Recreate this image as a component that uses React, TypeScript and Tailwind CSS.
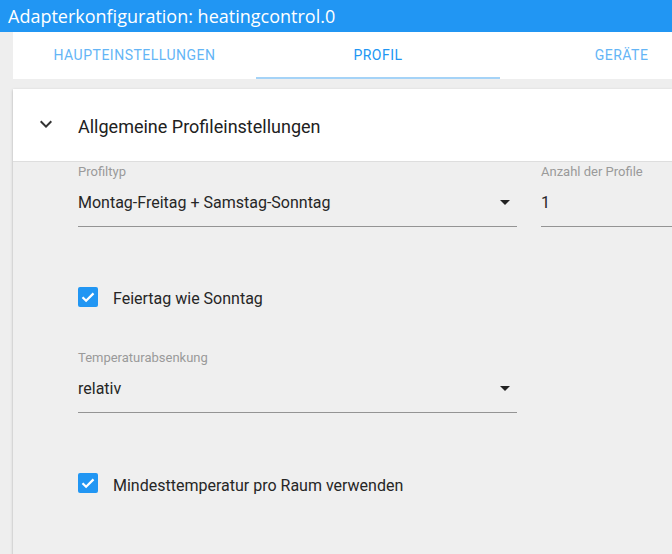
import React from "react";

function Arrow() {
  return (
    <svg width="24" height="24" viewBox="0 0 24 24" className="absolute right-0 top-[10px]">
      <path d="M7 10l5 5 5-5z" fill="#222" />
    </svg>
  );
}

function Check() {
  return (
    <svg width="20" height="20" viewBox="0 0 20 20" className="shrink-0">
      <rect x="0" y="0" width="20" height="20" rx="2" fill="#2196f3" />
      <path d="M4.5 10.2l3.6 3.6 7.4-7.4" fill="none" stroke="#fff" strokeWidth="2.2" />
    </svg>
  );
}

export default function App() {
  return (
    <div className="w-[672px] h-[554px] bg-[#eeeeee] overflow-hidden" style={{ fontFamily: "Roboto, 'Liberation Sans', sans-serif" }}>
      <div className="h-[32px] bg-[#2196f3] text-white pl-[8px] text-[18px] leading-[32px] whitespace-nowrap" style={{ fontFamily: "'Open Sans', 'Noto Sans', sans-serif" }}>
        Adapterkonfiguration: heatingcontrol.0
      </div>
      <div className="ml-[13px] h-[47px] bg-white flex overflow-hidden">
        <div className="w-[243px] shrink-0 flex items-center justify-center text-[14px] text-[#64b5f6] tracking-[0.5px]">HAUPTEINSTELLUNGEN</div>
        <div className="w-[244px] shrink-0 flex items-center justify-center text-[14px] text-[#2196f3] relative tracking-[0.5px]">
          PROFIL
          <div className="absolute left-0 right-0 bottom-0 h-[2px] bg-[#a5d3f7]" />
        </div>
        <div className="w-[243px] shrink-0 flex items-center justify-center text-[14px] text-[#64b5f6] tracking-[0.5px]">GERÄTE</div>
      </div>
      <div className="ml-[13px] mt-[10px] h-[600px] bg-[#efefef] shadow-[0_1px_3px_0_rgba(0,0,0,0.2),0_1px_1px_0_rgba(0,0,0,0.14),0_2px_1px_-1px_rgba(0,0,0,0.12)]">
        <div className="h-[73px] bg-white border-b border-[#dedede] flex items-center">
          <svg width="24" height="24" viewBox="0 0 24 24" className="ml-[21px] mt-[-3px]">
            <path d="M16.59 8.59L12 13.17 7.41 8.59 6 10l6 6 6-6z" fill="#333" />
          </svg>
          <div className="ml-[20px] text-[18px] text-[#212121] pt-[3px]">Allgemeine Profileinstellungen</div>
        </div>
        <div className="pl-[65px]">
          <div className="flex gap-[24px] pt-[1px]">
            <div className="w-[439px] shrink-0">
              <div className="h-[17px] text-[13px] leading-[17px] text-[#9a9a9a]">Profiltyp</div>
              <div className="relative h-[47px] border-b border-[#949494] flex items-center text-[16px] text-[#262626]">
                Montag-Freitag + Samstag-Sonntag
                <Arrow />
              </div>
            </div>
            <div className="w-[200px] shrink-0">
              <div className="h-[17px] text-[13px] leading-[17px] text-[#9a9a9a]">Anzahl der Profile</div>
              <div className="h-[47px] border-b border-[#949494] flex items-center text-[16px] text-[#262626]">1</div>
            </div>
          </div>
          <div className="mt-[60px] flex items-center h-[20px]">
            <Check />
            <div className="ml-[15px] text-[16px] text-[#262626] pt-[3px]">Feiertag wie Sonntag</div>
          </div>
          <div className="mt-[42px] w-[439px]">
            <div className="h-[17px] text-[13px] leading-[17px] text-[#9a9a9a]">Temperaturabsenkung</div>
            <div className="relative h-[47px] border-b border-[#949494] flex items-center text-[16px] text-[#262626]">
              relativ
              <Arrow />
            </div>
          </div>
          <div className="mt-[60px] flex items-center h-[20px]">
            <Check />
            <div className="ml-[15px] text-[16px] text-[#262626] pt-[5px]">Mindesttemperatur pro Raum verwenden</div>
          </div>
        </div>
      </div>
    </div>
  );
}
